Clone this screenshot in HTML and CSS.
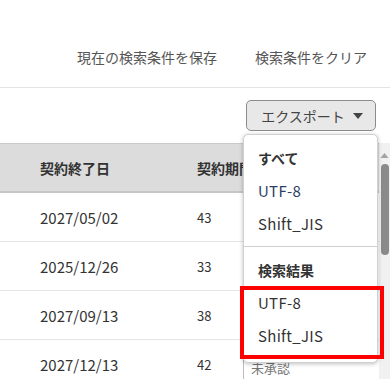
FILE: index.html
```html
<!DOCTYPE html>
<html lang="ja">
<head>
<meta charset="utf-8">
<link rel="stylesheet" href="styles.css">
</head>
<body>
<div class="toolbar">
  <a class="tool-link">現在の検索条件を保存</a>
  <a class="tool-link">検索条件をクリア</a>
</div>
<div class="export-row">
  <div class="export">
    <button class="export-btn">エクスポート<svg class="caret" width="10" height="6" viewBox="0 0 10 6"><path d="M0 0H10L5 6Z" fill="#444"/></svg></button>
    <div class="menu">
      <div class="menu-section">
        <div class="menu-label">すべて</div>
        <div class="menu-item focus">UTF-8</div>
        <div class="menu-item">Shift_JIS</div>
      </div>
      <div class="menu-section second">
        <div class="menu-label">検索結果</div>
        <div class="menu-group">
          <div class="menu-item">UTF-8</div>
          <div class="menu-item">Shift_JIS</div>
        </div>
      </div>
    </div>
  </div>
</div>
<div class="table-area">
  <div class="table">
    <div class="row head">
      <div class="cell c1">契約終了日</div>
      <div class="cell c2">契約期間</div>
      <div class="cell c3"></div>
    </div>
    <div class="row">
      <div class="cell c1">2027/05/02</div>
      <div class="cell c2 num">43</div>
      <div class="cell c3"></div>
    </div>
    <div class="row">
      <div class="cell c1">2025/12/26</div>
      <div class="cell c2 num">33</div>
      <div class="cell c3"></div>
    </div>
    <div class="row">
      <div class="cell c1">2027/09/13</div>
      <div class="cell c2 num">38</div>
      <div class="cell c3"></div>
    </div>
    <div class="row">
      <div class="cell c1">2027/12/13</div>
      <div class="cell c2 num">42</div>
      <div class="cell c3 low">未承認</div>
    </div>
  </div>
  <div class="scrollbar">
    <svg class="arrow" width="11" height="8" viewBox="0 0 11 8"><path d="M1.5 7H9.5L5.5 2Z" fill="#a3a3a3"/></svg>
    <div class="thumb"></div>
  </div>
</div>
</body>
</html>
```

FILE: styles.css
```css
* { box-sizing: border-box; }
html, body { margin: 0; padding: 0; }
body {
  width: 390px;
  height: 379px;
  overflow: hidden;
  background: #fff;
  font-family: "Noto Sans CJK JP", "Noto Sans", sans-serif;
  color: #333;
}
.toolbar {
  height: 88px;
  display: flex;
  justify-content: flex-end;
  align-items: flex-start;
  gap: 38px;
  padding: 46px 23px 0 0;
  border-bottom: 1px solid #e4e4e4;
}
.tool-link {
  font-size: 14px;
  line-height: 22px;
  color: #555;
}
.export-row {
  display: flex;
  justify-content: flex-end;
  padding: 12px 14px 0 0;
  height: 55px;
}
.export {
  position: relative;
  z-index: 2;
}
.export-btn {
  width: 130px;
  height: 31px;
  display: flex;
  align-items: center;
  justify-content: center;
  gap: 8px;
  padding: 0 0 0 2px;
  border: 1px solid #8c8c8c;
  border-radius: 5px;
  background: #e8e8e8;
  font-family: inherit;
  font-size: 14px;
  color: #444;
}
.caret { display: block; margin-top: 1px; }
.menu {
  position: absolute;
  top: 34px;
  right: -2px;
  width: 135px;
  height: 229px;
  background: #fff;
  border: 1px solid #d0d0d0;
  border-radius: 5px;
  box-shadow: 0 1px 4px rgba(0,0,0,0.25);
  padding-top: 7px;
}
.menu-section { padding-bottom: 6px; }
.menu-section.second {
  border-top: 1px solid #cfcfcf;
  padding-top: 7px;
  padding-bottom: 0;
}
.menu-label {
  height: 32px;
  line-height: 32px;
  padding-left: 14px;
  font-weight: bold;
  font-size: 14px;
  color: #333;
}
.menu-item {
  height: 33px;
  line-height: 33px;
  padding-left: 14px;
  font-size: 15px;
  letter-spacing: 0.3px;
  color: #333;
}
.menu-item.focus { color: #2e3f63; }
.menu-group { position: relative; }
.menu-group::after {
  content: "";
  position: absolute;
  top: 0;
  bottom: -7px;
  left: -4px;
  right: -7px;
  border: 4px solid #ff0000;
}
.table-area {
  display: flex;
  height: 236px;
}
.table { flex: 1; }
.row {
  display: grid;
  grid-template-columns: 197px 46px 1fr;
  height: 49px;
  border-bottom: 1px solid #e6e6e6;
  align-items: center;
}
.row.head {
  height: 50px;
  background: #dcdcdc;
  border-top: 1px solid #cacaca;
  border-bottom: 2px solid #c6c6c6;
  font-weight: bold;
}
.cell {
  font-size: 15px;
  white-space: nowrap;
}
.row.head .cell { font-size: 14px; }
.c1 { padding-left: 40px; }
.num { font-size: 13px; }
.c3 {
  align-self: stretch;
  display: flex;
  align-items: center;
  padding-left: 7px;
  border-left: 1px solid #bdbdbd;
  color: #777;
  font-size: 13px;
}
.c3.low { padding-top: 6px; }
.row.head .c3 { border-left: none; }
.scrollbar {
  width: 11px;
  background: #f1f1f1;
  display: flex;
  flex-direction: column;
  align-items: center;
  padding-top: 8px;
}
.arrow { display: block; }
.thumb {
  margin-top: 5px;
  width: 8px;
  height: 91px;
  border-radius: 4px;
  background: #8a8a8a;
}
```
